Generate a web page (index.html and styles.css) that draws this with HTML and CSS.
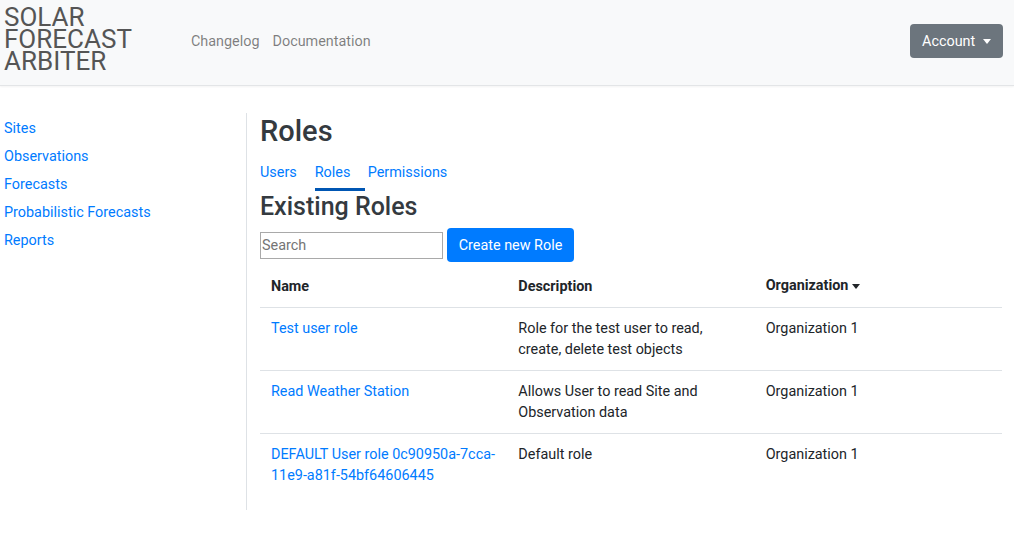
FILE: index.html
```html
<!DOCTYPE html>
<html>
<head>
<meta charset="utf-8">
<link rel="stylesheet" href="styles.css">
</head>
<body>
<header class="navbar">
  <a class="brand" href="#">SOLAR<br>FORECAST<br>ARBITER</a>
  <nav class="topnav">
    <a href="#">Changelog</a>
    <a href="#">Documentation</a>
  </nav>
  <button class="account">Account <span class="caret"></span></button>
</header>
<div class="page">
  <aside class="sidebar">
    <a href="#">Sites</a>
    <a href="#">Observations</a>
    <a href="#">Forecasts</a>
    <a href="#">Probabilistic Forecasts</a>
    <a href="#">Reports</a>
  </aside>
  <main class="main">
    <h1 class="title">Roles</h1>
    <nav class="tabs">
      <a href="#">Users</a>
      <a href="#" class="active">Roles</a>
      <a href="#">Permissions</a>
    </nav>
    <h2 class="subtitle">Existing Roles</h2>
    <div class="toolbar">
      <input class="search" type="text" placeholder="Search">
      <button class="create">Create new Role</button>
    </div>
    <table class="roles">
      <thead>
        <tr>
          <th>Name</th>
          <th>Description</th>
          <th class="sortable">Organization <span class="caret dark"></span></th>
        </tr>
      </thead>
      <tbody>
        <tr>
          <td><a href="#">Test user role</a></td>
          <td>Role for the test user to read, create, delete test objects</td>
          <td>Organization 1</td>
        </tr>
        <tr>
          <td><a href="#">Read Weather Station</a></td>
          <td>Allows User to read Site and Observation data</td>
          <td>Organization 1</td>
        </tr>
        <tr>
          <td><a href="#">DEFAULT User role 0c90950a-7cca-11e9-a81f-54bf64606445</a></td>
          <td>Default role</td>
          <td>Organization 1</td>
        </tr>
      </tbody>
    </table>
  </main>
</div>
</body>
</html>
```
FILE: styles.css
```css
* { box-sizing: border-box; }
body {
  margin: 0;
  font-family: Roboto, "Liberation Sans", sans-serif;
  font-size: 14.4px;
  color: #212529;
  background: #fff;
}
a { color: #007bff; text-decoration: none; }

.navbar {
  display: flex;
  align-items: center;
  height: 86px;
  padding: 0 11px 3px 4px;
  background: #f8f9fa;
  border-bottom: 1px solid #e3e5e7;
  box-shadow: 0 1px 2px rgba(0,0,0,0.05);
}
.brand {
  color: #555;
  font-size: 26px;
  line-height: 22px;
  font-weight: 400;
  margin-bottom: 5px;
}
.topnav {
  display: flex;
  gap: 13px;
  margin-left: 59px;
  flex: 1;
}
.topnav a {
  color: rgba(0,0,0,0.5);
  font-size: 14.4px;
}
.account {
  font-family: inherit;
  font-size: 14.4px;
  color: #fff;
  background: #6c757d;
  border: none;
  border-radius: 4px;
  height: 34px;
  width: 93px;
  padding: 0 12px;
  display: flex;
  align-items: center;
  gap: 8px;
}
.caret {
  display: inline-block;
  width: 0;
  height: 0;
  border-left: 4.5px solid transparent;
  border-right: 4.5px solid transparent;
  border-top: 5px solid #fff;
  vertical-align: middle;
}
.caret.dark { border-top-color: #212529; margin-left: 0; }

.page {
  display: flex;
  padding-top: 27px;
}
.sidebar {
  width: 247px;
  flex: none;
  border-right: 1px solid #dee2e6;
  padding: 5px 0 0 4px;
  display: flex;
  flex-direction: column;
  gap: 7px;
  min-height: 397px;
}
.sidebar a {
  font-size: 14.4px;
  line-height: 21px;
}
.main {
  flex: 1;
  padding: 0 12px 0 13px;
}
.title {
  margin: 0;
  font-size: 29px;
  font-weight: 500;
  line-height: 36px;
  color: #343a40;
}
.tabs {
  display: flex;
  margin-top: 14px;
}
.tabs a {
  font-size: 14.4px;
  line-height: 20px;
  padding-bottom: 5px;
  border-bottom: 3px solid transparent;
  margin-right: 18px;
}
.tabs a.active {
  border-bottom-color: #0056b3;
  width: 50px;
  margin-right: 3px;
}
.subtitle {
  margin: 0;
  font-size: 25px;
  font-weight: 500;
  line-height: 31px;
  color: #343a40;
}
.toolbar {
  display: flex;
  align-items: center;
  gap: 4px;
  margin-top: 6px;
}
.search {
  width: 183px;
  height: 27px;
  border: 1px solid #a9a9a9;
  font-family: inherit;
  font-size: 14.4px;
  padding: 0 1px;
  color: #212529;
}
.search::placeholder { color: #757575; }
.create {
  font-family: inherit;
  font-size: 14.4px;
  color: #fff;
  background: #007bff;
  border: none;
  border-radius: 4px;
  height: 34px;
  width: 127px;
  padding: 0;
}
.roles {
  width: 100%;
  border-collapse: collapse;
  margin-top: 4px;
  table-layout: fixed;
}
.roles th, .roles td {
  text-align: left;
  vertical-align: top;
  padding: 10px 11px;
  line-height: 21px;
  font-size: 14.4px;
}
.roles th {
  font-weight: 700;
  border-bottom: 1px solid #dee2e6;
}
.roles td { border-bottom: 1px solid #dee2e6; }
.roles tbody tr:last-child td { border-bottom: none; }
.roles th.sortable { padding-top: 9px; }
```
